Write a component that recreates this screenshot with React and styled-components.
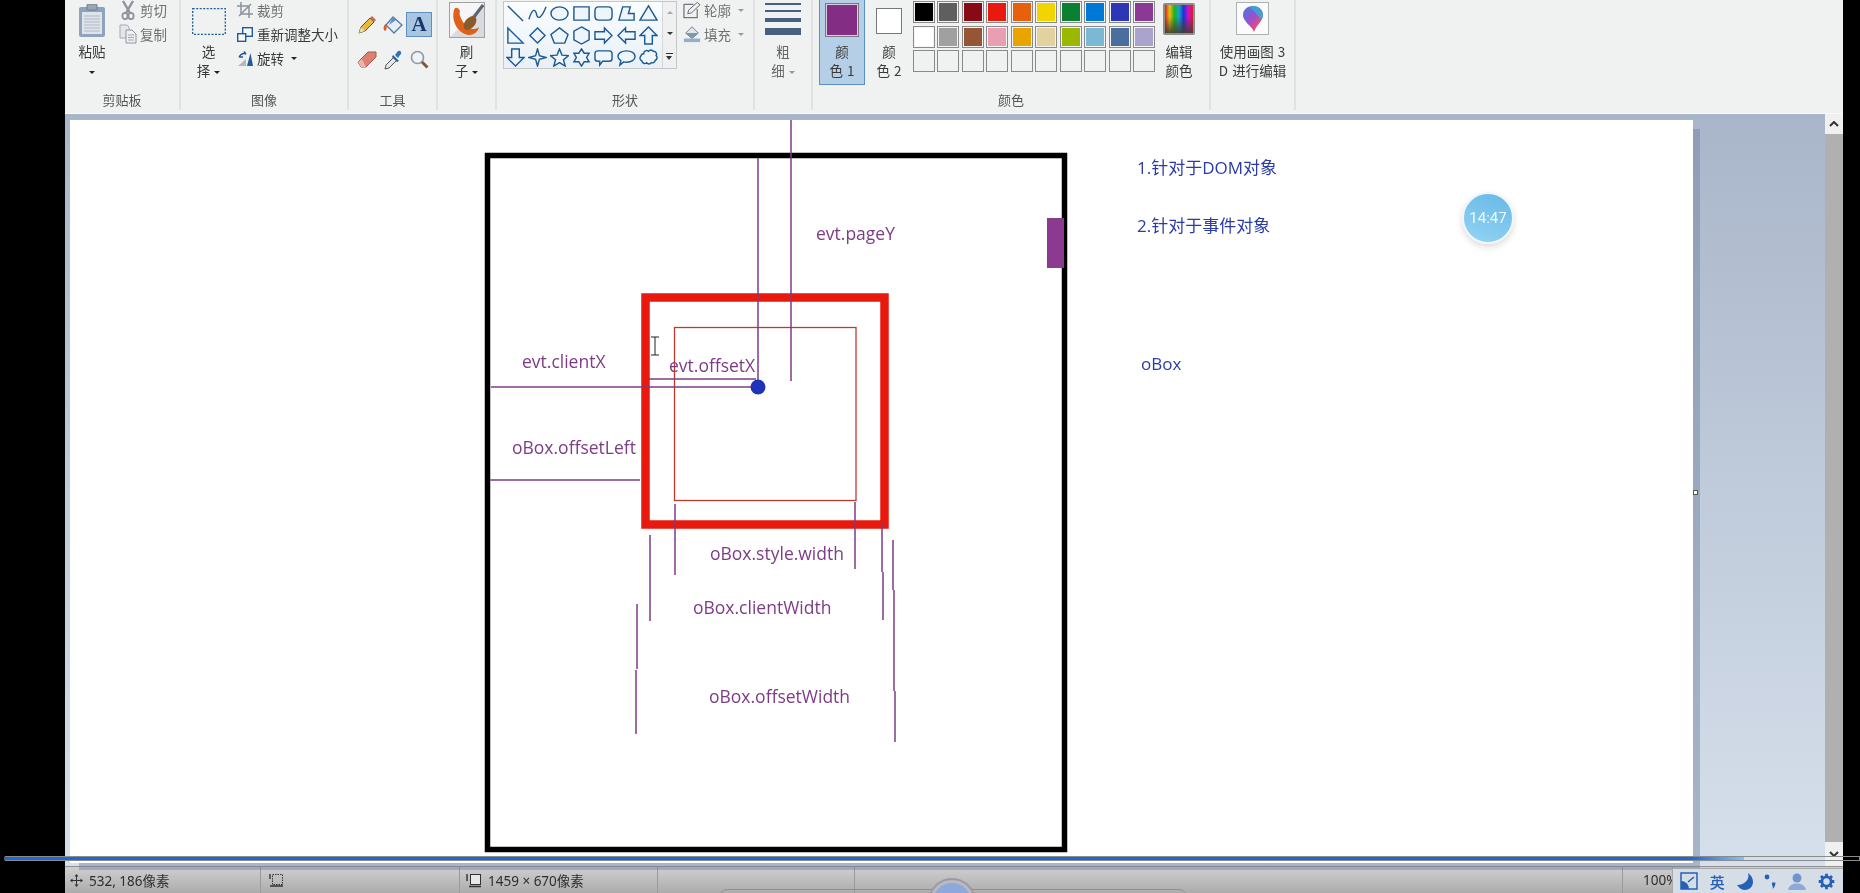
import React from "react";
import styled, { createGlobalStyle } from "styled-components";

const GlobalStyle = createGlobalStyle`
  html, body, #root { margin: 0; padding: 0; height: 100%; overflow: hidden; background: #000; }
  body { font-family: "Noto Sans CJK SC", "Liberation Sans", sans-serif; }
`;

const Page = styled.div`
  position: relative;
  display: flex;
  width: 1860px;
  height: 893px;
  padding: 0 17px 0 65px;
  box-sizing: border-box;
  overflow: hidden;
  background: #000;
  filter: blur(0.35px);
`;
const Win = styled.div`
  display: flex;
  flex-direction: column;
  flex: 1;
  min-width: 0;
`;

/* ribbon */
const Ribbon = styled.div`
  display: flex;
  height: 113px;
  flex: none;
  background: #f0f1f1;
  color: #3a3a3a;
  font-size: 13.5px;
  line-height: 19px;
  border-bottom: 1px solid #fafafa;
`;
const Group = styled.div`
  display: flex;
  flex-direction: column;
  flex: none;
  width: ${(p) => p.$w}px;
  height: 110px;
  box-sizing: border-box;
  border-right: 2px solid #e0e2e2;
`;
const GroupBody = styled.div`
  display: flex;
  height: 91px;
  padding-left: ${(p) => p.$pad || 0}px;
`;
const GroupLabel = styled.div`
  height: 18px;
  line-height: 18px;
  text-align: center;
  color: #555;
  font-size: 13px;
`;
const Tall = styled.div`
  display: flex;
  flex-direction: column;
  align-items: center;
  flex: none;
  width: ${(p) => p.$w}px;
  height: ${(p) => (p.$active ? "85px" : "auto")};
  box-sizing: border-box;
  background: ${(p) => (p.$active ? "#b5cfe6" : "transparent")};
  border: ${(p) => (p.$active ? "1px solid #5a90c8" : "none")};
  border-top: none;
  word-spacing: 1px;
`;
const TallIcon = styled.div`
  display: flex;
  align-items: center;
  justify-content: center;
  height: 42px;
  flex: none;
`;
const Line = styled.div`
  white-space: nowrap;
  height: 19px;
  color: ${(p) => (p.$dim ? "#666" : "inherit")};
`;
const Caret = styled.span`
  display: inline-block;
  width: 0;
  height: 0;
  margin-left: ${(p) => (p.$flush ? 0 : 4)}px;
  vertical-align: 2px;
  border-left: 3px solid transparent;
  border-right: 3px solid transparent;
  border-top: 3px solid ${(p) => (p.$dim ? "#999" : "#222")};
`;
const SmallCol = styled.div`
  display: flex;
  flex-direction: column;
  flex: none;
  margin-top: -2px;
`;
const SmallRow = styled.div`
  display: flex;
  align-items: center;
  gap: 3px;
  height: 24px;
  white-space: nowrap;
  color: ${(p) => (p.$dim ? "#707070" : "inherit")};
`;
const SmallIcon = styled.span`
  display: flex;
  justify-content: center;
  width: 18px;
  flex: none;
`;
const ToolGrid = styled.div`
  display: grid;
  grid-template-columns: repeat(3, 26px);
  grid-template-rows: 25px 25px;
  row-gap: 10px;
  padding: 12px 0 0 5px;
`;
const ToolCell = styled.div`
  display: flex;
  align-items: center;
  justify-content: center;
  box-sizing: border-box;
  background: ${(p) => (p.$on ? "#a8c5e2" : "transparent")};
  border: ${(p) => (p.$on ? "1px solid #5f8fc0" : "none")};
  font: bold 21px "Liberation Serif", serif;
  color: #17386c;
`;
const BrushBox = styled.div`
  width: 36px;
  height: 36px;
  margin-top: -2px;
  box-sizing: border-box;
  border: 1px solid #a0a0a0;
  background: #f6f6f6;
`;
const Gallery = styled.div`
  display: flex;
  width: 174px;
  height: 68px;
  margin: 1px 6px 0 0;
  box-sizing: border-box;
  border: 1px solid #c4c8c8;
  flex: none;
`;
const ShapeGrid = styled.div`
  display: grid;
  grid-template-columns: repeat(7, 22.2px);
  grid-template-rows: repeat(3, 22px);
  width: 158px;
  background: linear-gradient(#fbfdff, #e8f0f6);
  border-right: 1px solid #d4d8d8;
`;
const ShapeCell = styled.div`
  display: flex;
  align-items: center;
  justify-content: center;
`;
const GalleryScroll = styled.div`
  display: flex;
  flex-direction: column;
  align-items: center;
  justify-content: space-around;
  flex: 1;
  background: #f0f0f0;
`;
const ScrollArrow = styled.span`
  width: 0;
  height: 0;
  border-left: 3px solid transparent;
  border-right: 3px solid transparent;
  ${(p) => (p.$up ? "border-bottom: 3px solid #aaa;" : "border-top: 3px solid #333;")}
`;
const MoreBar = styled.span`
  width: 7px;
  height: 5px;
  border-top: 1px solid #333;
  position: relative;
  &::after {
    content: "";
    position: absolute;
    left: 0;
    top: 2px;
    border-left: 3.5px solid transparent;
    border-right: 3.5px solid transparent;
    border-top: 4px solid #333;
  }
`;
const SizeLines = styled.div`
  display: flex;
  flex-direction: column;
  width: 36px;
  height: 42px;
  padding-top: 3px;
  box-sizing: border-box;
`;
const SizeLine = styled.div`
  height: ${(p) => p.$h}px;
  margin-bottom: ${(p) => p.$gap}px;
  background: #47607f;
  flex: none;
`;
const ColorSwatch = styled.div`
  box-sizing: border-box;
  width: ${(p) => p.$size}px;
  height: ${(p) => p.$size}px;
  margin-top: ${(p) => (p.$big ? -2 : 0)}px;
  background: ${(p) => p.$bg};
  border: 1px solid #777;
  box-shadow: ${(p) => (p.$big ? "inset 0 0 0 1px #d8d0e0" : "none")};
`;
const Palette = styled.div`
  display: grid;
  grid-template-columns: repeat(10, 22px);
  grid-template-rows: repeat(3, 22px);
  column-gap: 2.45px;
  row-gap: 2.5px;
  flex: none;
  margin-top: 1px;
  width: 243px;
`;
const PaletteCell = styled.div`
  box-sizing: border-box;
  border: 1px solid #8a8a8a;
  background: ${(p) => p.$bg || "#f0f1f1"};
  box-shadow: ${(p) => (p.$bg ? "inset 0 0 0 1px #f4f4f4" : "none")};
`;
const SpectrumBox = styled.div`
  width: 32px;
  height: 32px;
  box-sizing: border-box;
  margin-top: -5px;
  border: 2px solid #8d8d8d;
  border-radius: 2px;
  background: linear-gradient(transparent 40%, rgba(70, 60, 50, 0.9)),
    linear-gradient(90deg, #e01c1c, #e8c010, #20b020, #10a8c8, #2030d8, #d010c8, #e01c1c);
`;
const LogoBox = styled.div`
  display: flex;
  align-items: center;
  justify-content: center;
  width: 33px;
  height: 33px;
  margin-top: -5px;
  box-sizing: border-box;
  border: 1px solid #b0b0b0;
  background: #fbfbfb;
`;

/* workspace */
const Workspace = styled.div`
  display: flex;
  flex: 1;
  min-height: 0;
  background: linear-gradient(#a9b5c9, #d6e0ec);
`;
const CanvasArea = styled.div`
  flex: 1;
  padding: 6px 132px 3px 5px;
  min-width: 0;
`;
const Canvas = styled.div`
  position: relative;
  width: 1623px;
  height: 100%;
  background: #fff;
  box-shadow: 8px 8px 0 -1px rgba(110, 128, 158, 0.45);
`;
const Drawing = styled.svg`
  position: absolute;
  inset: 0;
  width: 100%;
  height: 100%;
`;
const Note = styled.span`
  position: absolute;
  left: ${(p) => p.$x - 70}px;
  top: ${(p) => p.$y - 120}px;
  transform: translateY(-50%);
  font-family: "Open Sans", "Noto Sans CJK SC", sans-serif;
  font-size: ${(p) => (p.$blue ? 17 : 17.5)}px;
  line-height: 22px;
  white-space: nowrap;
  color: ${(p) => (p.$blue ? "#2b3ba6" : "#7d3c86")};
`;
const Handle = styled.span`
  position: absolute;
  left: 100%;
  top: 370px;
  width: 5px;
  height: 5px;
  box-sizing: border-box;
  background: #fff;
  border: 1px solid #555;
`;
const Clock = styled.div`
  position: absolute;
  left: 1392px;
  top: 72px;
  display: flex;
  align-items: center;
  justify-content: center;
  width: 52px;
  height: 52px;
  box-sizing: border-box;
  border-radius: 50%;
  border: 2px solid #f0f6fa;
  background: linear-gradient(20deg, #94d4f2, #66b8e8);
  box-shadow: 0 3px 6px rgba(0, 0, 0, 0.14);
  color: #f2fafe;
  font: 15px "Roboto", sans-serif;
`;
const Scrollbar = styled.div`
  display: flex;
  flex-direction: column;
  width: 18px;
  flex: none;
  background: #f0f0f0;
`;
const ScrollBtn = styled.div`
  display: flex;
  align-items: center;
  justify-content: center;
  height: ${(p) => p.$h}px;
  flex: none;
  color: #333;
`;
const ScrollThumb = styled.div`
  flex: 1;
  background: #b0b0b0;
`;

/* status bar */
const Status = styled.div`
  display: flex;
  height: 27px;
  flex: none;
  background: linear-gradient(#cfcfcf, #acacac);
  border-top: 1px solid #8f8f8f;
  box-sizing: border-box;
  font: 13.5px "Noto Sans", "Noto Sans CJK SC", sans-serif;
  color: #2e2e2e;
`;
const StatusCell = styled.div`
  display: flex;
  align-items: center;
  gap: 6px;
  flex: none;
  width: ${(p) => p.$w}px;
  padding-left: ${(p) => p.$pad || 0}px;
  box-sizing: border-box;
  border-right: 1px solid #9a9a9a;
  white-space: nowrap;
`;
const Progress = styled.div`
  position: absolute;
  left: 4px;
  right: 0;
  top: 856px;
  height: 5px;
  box-sizing: border-box;
  border: 1px solid #8b8b8b;
  border-left-color: #666;
  border-radius: 2px 0 0 2px;
`;
const ProgressFill = styled.div`
  height: 3px;
  background: linear-gradient(90deg, #1769e0 97%, #8cc0f0);
`;
const Dock = styled.div`
  position: absolute;
  left: 719px;
  top: 889px;
  width: 468px;
  height: 20px;
  box-sizing: border-box;
  border: 1px solid #8e8e9e;
  border-radius: 8px 8px 0 0;
`;
const DockButton = styled.div`
  position: absolute;
  left: 928px;
  top: 878px;
  width: 48px;
  height: 48px;
  box-sizing: border-box;
  border-radius: 50%;
  border: 2px solid #9a9aa8;
  background: #b9b9bf;
  &::after {
    content: "";
    position: absolute;
    inset: 3px;
    border-radius: 50%;
    background: #8da8dc;
  }
`;
const Tray = styled.div`
  position: absolute;
  left: 1672px;
  top: 868px;
  display: flex;
  align-items: center;
  justify-content: space-between;
  width: 171px;
  height: 25px;
  padding: 0 8px 0 7px;
  box-sizing: border-box;
  background: #d5dde6;
  border-top: 1px solid #a8a8a8;
  border-left: 1px solid #a8a8a8;
  color: #2761b6;
  font-size: 15px;
  font-weight: 500;
`;

const PALETTE = [
  "#000000", "#5f5f5f", "#880a14", "#e8190e", "#e8600a", "#f2d500", "#0a8030", "#0078d7", "#2e36b8", "#8a3a94",
  "#ffffff", "#a0a0a0", "#955636", "#e89fb4", "#eaa400", "#e3d29e", "#9ab800", "#7ab8d4", "#4a6f9f", "#aaa4cc",
  null, null, null, null, null, null, null, null, null, null,
];

const SHAPES = [
  "M2 2L18 18",
  "M1 16C5 3 8 6 9 11S14 16 19 3",
  "M1 10a9 7 0 1 0 18 0a9 7 0 1 0-18 0Z",
  "M2 3H18V17H2Z",
  "M5 3H15Q19 3 19 7V13Q19 17 15 17H5Q1 17 1 13V7Q1 3 5 3Z",
  "M2 17L6 3H14L12 10H18V17Z",
  "M10 2L19 17H1Z",
  "M2 2L18 18H2Z",
  "M10 2L18 10L10 18L2 10Z",
  "M10 2L19 9L15.5 18H4.5L1 9Z",
  "M10 1L18 5.5V14.5L10 19L2 14.5V5.5Z",
  "M1 6H11V2L19 10L11 18V14H1Z",
  "M19 6H9V2L1 10L9 18V14H19Z",
  "M10 1L19 10H14V19H6V10H1Z",
  "M6 1H14V10H19L10 19L1 10H6Z",
  "M10 1L12 8L19 10L12 12L10 19L8 12L1 10L8 8Z",
  "M10 1L12.6 7.5L19.5 8L14.2 12.3L16 19L10 15.3L4 19L5.8 12.3L.5 8L7.4 7.5Z",
  "M10 1L12.8 5.5H18L15.4 10L18 14.5H12.8L10 19L7.2 14.5H2L4.6 10L2 5.5H7.2Z",
  "M4 3H16Q19 3 19 6V11Q19 14 16 14H9L6 18V14H4Q1 14 1 11V6Q1 3 4 3Z",
  "M10 3C15 3 19 5.5 19 9S15 15 10 15Q8 15 7 14.6L3 18L4 13.2Q1 11.5 1 9C1 5.5 5 3 10 3Z",
  "M5 6a3 3 0 0 1 5-2.500a3 3 0 0 1 5 0a3 3 0 0 1 3 4.500a3 3 0 0 1-1 5a3 3 0 0 1-4 2.500a3 3 0 0 1-5 0a3 3 0 0 1-5-2a3 3 0 0 1-1-5a3 3 0 0 1 3-2.500Z",
];

const PURPLE_LINES = [
  [758, 158, 758, 387],
  [791, 120, 791, 381],
  [491, 387, 752, 387],
  [649, 379, 756, 379],
  [490, 480, 640, 480],
  [675, 504, 675, 575],
  [855, 502, 855, 569],
  [650, 535, 650, 621],
  [882, 524, 882, 572],
  [883, 572, 883, 620],
  [893, 540, 893, 590],
  [894, 590, 894, 691],
  [895, 691, 895, 742],
  [637, 604, 637, 669],
  [636, 670, 636, 734],
];

const PasteIcon = () => (
  <svg width="28" height="34" viewBox="0 0 28 34">
    <rect x="1" y="3" width="26" height="30" rx="2" fill="#8fa3bc" />
    <rect x="4" y="8" width="20" height="22" fill="#dfe4ea" />
    <path d="M6 12H22M6 15H22M6 18H22M6 21H22M6 24H22M6 27H22" stroke="#aeb9c6" />
    <rect x="9" y="0" width="10" height="6" rx="1" fill="#9aa6b4" stroke="#6f7c8c" />
  </svg>
);
const ScissorsIcon = () => (
  <svg width="14" height="20" viewBox="0 0 14 20">
    <path d="M2 1L9 13M12 1L5 13" stroke="#8d9199" strokeWidth="2.4" />
    <ellipse cx="4" cy="16" rx="2.6" ry="3.2" fill="none" stroke="#8d9199" strokeWidth="1.8" />
    <ellipse cx="10" cy="16" rx="2.6" ry="3.2" fill="none" stroke="#8d9199" strokeWidth="1.8" />
  </svg>
);
const CopyIcon = () => (
  <svg width="18" height="20" viewBox="0 0 18 20">
    <path d="M1 1H8L10 3V14H1Z" fill="#e4e6e8" stroke="#a6abb2" />
    <path d="M7 6H13L17 10V19H7Z" fill="#eef0f2" stroke="#8f959d" />
    <path d="M9 11H15M9 13.5H15M9 16H15" stroke="#a0a5ac" />
  </svg>
);
const CropIcon = () => (
  <svg width="16" height="16" viewBox="0 0 16 16">
    <path d="M4 0V12H16M0 4H12V16M2 14L14 2" fill="none" stroke="#8d939b" strokeWidth="1.5" />
  </svg>
);
const ResizeIcon = () => (
  <svg width="16" height="15" viewBox="0 0 16 15">
    <rect x="5.7" y=".7" width="9.6" height="8.6" fill="#f7f9fb" stroke="#1f5c99" strokeWidth="1.4" />
    <rect x=".7" y="6.7" width="8" height="7.6" fill="#f7f9fb" stroke="#1f5c99" strokeWidth="1.4" />
  </svg>
);
const RotateIcon = () => (
  <svg width="17" height="15" viewBox="0 0 17 15">
    <path d="M10 15L16 15L13.5 2Z" fill="#1f5c99" />
    <path d="M1 15H9V8Z" fill="#b4b8bc" />
    <path d="M2 6Q5 1 9 3M2 6L6 6M9 3L7 .5" fill="none" stroke="#1f5c99" strokeWidth="1.4" />
  </svg>
);
const PencilIcon = () => (
  <svg width="18" height="18" viewBox="0 0 18 18">
    <path d="M1 17L3 11L12 2L16 6L7 15Z" fill="#e8b93a" stroke="#5b5330" strokeWidth="1" />
    <path d="M12 2L14 0L18 4L16 6Z" fill="#c86a5a" />
    <path d="M1 17L3 11L7 15Z" fill="#f0d8b0" />
  </svg>
);
const FillIcon = () => (
  <svg width="20" height="20" viewBox="0 0 20 20">
    <path d="M10 2L19 10L11 18L3 10Z" fill="#e6edf4" stroke="#4f7aa4" strokeWidth="1.3" />
    <path d="M6 10L10 2L13 5Z" fill="#5f92c0" />
    <path d="M3 9C0 10 0 15 2 16C4 15 4 12 3 9Z" fill="#e05a20" />
  </svg>
);
const EraserIcon = () => (
  <svg width="20" height="17" viewBox="0 0 20 17">
    <path d="M1 11L11 1H19V6L9 16H4Z" fill="#df7f72" stroke="#a35a50" />
    <path d="M1 11L5 8L9 16H4Z" fill="#eeb4a8" />
  </svg>
);
const PickerIcon = () => (
  <svg width="18" height="20" viewBox="0 0 18 20">
    <path d="M1 19L2 15L10 7L13 10L5 18Z" fill="#e4e8ec" stroke="#555" />
    <path d="M9 5L15 11L13 12L8 7Z" fill="#1f5c99" />
    <path d="M11 5L14 1Q16 0 17 2Q18 4 16 5L14 8Z" fill="#2b74bc" />
  </svg>
);
const GlassIcon = () => (
  <svg width="19" height="19" viewBox="0 0 19 19">
    <circle cx="7.500" cy="7.500" r="6" fill="#eef3f7" stroke="#8f979f" strokeWidth="1.6" />
    <path d="M12 12L17.500 17.500" stroke="#7d5a3c" strokeWidth="3" />
  </svg>
);
const BrushIcon = () => (
  <svg width="34" height="34" viewBox="0 0 34 34">
    <path d="M34 0V34H0Z" fill="#d8dbe0" />
    <path d="M4 7C1 18 8 31 19 32C25 32 28 28 29 24C24 28 17 26 13 19C10 14 9 11 10 8C8 4 5 4 4 7Z" fill="#e0601a" />
    <path d="M24 14L33 2" stroke="#5c6470" strokeWidth="3" />
    <ellipse cx="20" cy="20" rx="8" ry="5" transform="rotate(-50 20 20)" fill="#8a5a2a" />
  </svg>
);
const OutlineIcon = () => (
  <svg width="19" height="18" viewBox="0 0 19 18">
    <path d="M1 3H11M1 3V17H15V8" fill="none" stroke="#6f767e" strokeWidth="1.3" />
    <path d="M5 13L6 9L15 1L18 3.500L9 12Z" fill="#eef0f2" stroke="#5f666e" />
  </svg>
);
const BucketIcon = () => (
  <svg width="20" height="18" viewBox="0 0 20 18">
    <path d="M10 1L17 8L10 14L3 8Z" fill="#dfe6ec" stroke="#6a7884" />
    <path d="M1 14H19V18H1Z" fill="#98aec4" />
    <path d="M3 8L10 14L17 8Z" fill="#7e98b0" />
  </svg>
);
const SelectIcon = () => (
  <svg width="34" height="27" viewBox="0 0 34 27">
    <rect x=".7" y=".7" width="32.600" height="25.600" fill="none" stroke="#1f5c99" strokeWidth="1.3" strokeDasharray="2 1.500" />
  </svg>
);
const Paint3DLogo = () => (
  <svg width="22" height="28" viewBox="0 0 22 28">
    <defs>
      <linearGradient id="drop" x1="0" y1="0" x2="1" y2="1">
        <stop offset="0" stopColor="#3d7fe0" />
        <stop offset=".45" stopColor="#9a4fd0" />
        <stop offset=".75" stopColor="#e84c78" />
        <stop offset="1" stopColor="#f0a020" />
      </linearGradient>
    </defs>
    <path d="M11 1C17 1 21 5 21 10C21 16 15 19 12 27C10 21 1 17 1 10C1 5 5 1 11 1Z" fill="url(#drop)" />
    <path d="M11 1C17 1 21 5 21 10C21 12 20 14 19 15C16 10 12 6 7 2Z" fill="#22b8d8" opacity=".75" />
  </svg>
);

const MoveIcon = () => (
  <svg width="13" height="13" viewBox="0 0 13 13">
    <path d="M6.500 0L8.500 2.500H4.500ZM6.500 13L4.500 10.500H8.500ZM0 6.500L2.500 4.500V8.500ZM13 6.500L10.500 8.500V4.500ZM6 2H7V11H6ZM2 6H11V7H2Z" fill="#333" />
  </svg>
);
const SelSizeIcon = () => (
  <svg width="15" height="15" viewBox="0 0 15 15">
    <rect x="3.500" y="1.500" width="10" height="10" fill="none" stroke="#333" strokeDasharray="1.500 1" />
    <path d="M1 1V6M1 13H14" stroke="#333" strokeWidth="1.400" />
  </svg>
);
const CanvasSizeIcon = () => (
  <svg width="16" height="15" viewBox="0 0 16 15">
    <rect x="4.500" y="1.500" width="10" height="10" fill="#e8e8e8" stroke="#333" />
    <path d="M1 1V8M3 13.500H15" stroke="#333" strokeWidth="1.400" />
  </svg>
);

const ChevronUp = () => (
  <svg width="10" height="6" viewBox="0 0 10 6">
    <path d="M1 5L5 1L9 5" fill="none" stroke="currentColor" strokeWidth="2" />
  </svg>
);
const ChevronDown = () => (
  <svg width="10" height="6" viewBox="0 0 10 6">
    <path d="M1 1L5 5L9 1" fill="none" stroke="currentColor" strokeWidth="2" />
  </svg>
);

const TrayTablet = () => (
  <svg width="18" height="18" viewBox="0 0 18 18">
    <path d="M1 1H17V17H1Z" fill="none" stroke="#2761b6" strokeWidth="1.500" />
    <path d="M1 17V9A8 8 0 0 1 9 17Z" fill="#2761b6" />
    <path d="M8 10L14 5" stroke="#2761b6" strokeWidth="1.500" />
  </svg>
);
const TrayMoon = () => (
  <svg width="16" height="17" viewBox="0 0 16 17">
    <path d="M11 0C13 6 8 12 0 12C2 15 5 17 8 17C13 17 16 13 16 9C16 5 14 2 11 0Z" fill="#2761b6" />
  </svg>
);
const TrayPunct = () => (
  <svg width="12" height="15" viewBox="0 0 12 15">
    <circle cx="3" cy="3" r="2.400" fill="#2761b6" />
    <path d="M8 8.500H11.500C11.500 11 10.500 13.500 8.500 15C9 13 9 11.500 8 11.500Z" fill="#2761b6" />
  </svg>
);
const TrayUser = () => (
  <svg width="18" height="17" viewBox="0 0 18 17">
    <circle cx="9" cy="5" r="4.500" fill="#6f96cc" />
    <path d="M0 17C1 12 5 10.500 9 10.500S17 12 18 17Z" fill="#8eaad4" />
  </svg>
);
const TrayGear = () => (
  <svg width="17" height="17" viewBox="0 0 24 24">
    <circle cx="12" cy="12" r="6.500" fill="none" stroke="#2761b6" strokeWidth="4" />
    <path d="M12 1V5M12 19V23M1 12H5M19 12H23M4.200 4.200L7 7M17 17L19.800 19.800M19.800 4.200L17 7M7 17L4.200 19.800" stroke="#2761b6" strokeWidth="4" />
  </svg>
);

export default function App() {
  return (
    <Page>
      <GlobalStyle />
      <Win>
        <Ribbon>
          <Group $w={116}>
            <GroupBody>
              <Tall $w={54}>
                <TallIcon><PasteIcon /></TallIcon>
                <Line>粘贴</Line>
                <Line><Caret $flush /></Line>
              </Tall>
              <SmallCol>
                <SmallRow $dim><SmallIcon><ScissorsIcon /></SmallIcon>剪切</SmallRow>
                <SmallRow $dim><SmallIcon><CopyIcon /></SmallIcon>复制</SmallRow>
              </SmallCol>
            </GroupBody>
            <GroupLabel>剪贴板</GroupLabel>
          </Group>
          <Group $w={168}>
            <GroupBody>
              <Tall $w={55}>
                <TallIcon><SelectIcon /></TallIcon>
                <Line>选</Line>
                <Line>择<Caret /></Line>
              </Tall>
              <SmallCol>
                <SmallRow $dim><SmallIcon><CropIcon /></SmallIcon>裁剪</SmallRow>
                <SmallRow><SmallIcon><ResizeIcon /></SmallIcon>重新调整大小</SmallRow>
                <SmallRow><SmallIcon><RotateIcon /></SmallIcon>旋转<Caret /></SmallRow>
              </SmallCol>
            </GroupBody>
            <GroupLabel>图像</GroupLabel>
          </Group>
          <Group $w={89}>
            <GroupBody>
              <ToolGrid>
                <ToolCell><PencilIcon /></ToolCell>
                <ToolCell><FillIcon /></ToolCell>
                <ToolCell $on>A</ToolCell>
                <ToolCell><EraserIcon /></ToolCell>
                <ToolCell><PickerIcon /></ToolCell>
                <ToolCell><GlassIcon /></ToolCell>
              </ToolGrid>
            </GroupBody>
            <GroupLabel>工具</GroupLabel>
          </Group>
          <Group $w={59}>
            <GroupBody>
              <Tall $w={57}>
                <TallIcon>
                  <BrushBox><BrushIcon /></BrushBox>
                </TallIcon>
                <Line>刷</Line>
                <Line>子<Caret /></Line>
              </Tall>
            </GroupBody>
          </Group>
          <Group $w={258}>
            <GroupBody $pad={6}>
              <Gallery>
                <ShapeGrid>
                  {SHAPES.map((d) => (
                    <ShapeCell key={d}>
                      <svg width="19" height="19" viewBox="0 0 20 20">
                        <path d={d} fill={d === SHAPES[0] || d === SHAPES[1] ? "none" : "#eef5fb"} stroke="#1c5a94" strokeWidth="1.500" />
                      </svg>
                    </ShapeCell>
                  ))}
                </ShapeGrid>
                <GalleryScroll>
                  <ScrollArrow $up />
                  <ScrollArrow />
                  <MoreBar />
                </GalleryScroll>
              </Gallery>
              <SmallCol>
                <SmallRow $dim><SmallIcon><OutlineIcon /></SmallIcon>轮廓<Caret $dim /></SmallRow>
                <SmallRow $dim><SmallIcon><BucketIcon /></SmallIcon>填充<Caret $dim /></SmallRow>
              </SmallCol>
            </GroupBody>
            <GroupLabel>形状</GroupLabel>
          </Group>
          <Group $w={58}>
            <GroupBody>
              <Tall $w={56}>
                <SizeLines>
                  <SizeLine $h={1.500} $gap={5} />
                  <SizeLine $h={2} $gap={6} />
                  <SizeLine $h={4} $gap={6} />
                  <SizeLine $h={7} $gap={0} />
                </SizeLines>
                <Line $dim>粗</Line>
                <Line $dim>细<Caret $dim /></Line>
              </Tall>
            </GroupBody>
          </Group>
          <Group $w={398}>
            <GroupBody $pad={6}>
              <Tall $w={46} $active>
                <TallIcon><ColorSwatch $size={34} $bg="#842d85" $big /></TallIcon>
                <Line>颜</Line>
                <Line>色 1</Line>
              </Tall>
              <Tall $w={48}>
                <TallIcon><ColorSwatch $size={26} $bg="#fff" /></TallIcon>
                <Line>颜</Line>
                <Line>色 2</Line>
              </Tall>
              <Palette>
                {PALETTE.map((c, i) => (
                  <PaletteCell key={i} $bg={c} />
                ))}
              </Palette>
              <Tall $w={46}>
                <TallIcon><SpectrumBox /></TallIcon>
                <Line>编辑</Line>
                <Line>颜色</Line>
              </Tall>
            </GroupBody>
            <GroupLabel>颜色</GroupLabel>
          </Group>
          <Group $w={85}>
            <GroupBody>
              <Tall $w={83}>
                <TallIcon><LogoBox><Paint3DLogo /></LogoBox></TallIcon>
                <Line>使用画图 3</Line>
                <Line>D 进行编辑</Line>
              </Tall>
            </GroupBody>
          </Group>
        </Ribbon>

        <Workspace>
          <CanvasArea>
            <Canvas>
              <Drawing viewBox="70 120 1623 743">
                <rect x="487.500" y="155.500" width="577" height="694" fill="none" stroke="#000" strokeWidth="5.500" />
                <rect x="1047" y="218" width="17" height="50" fill="#8b3a8f" />
                <rect x="645.500" y="297.500" width="239" height="227" fill="none" stroke="#e8190e" strokeWidth="8.500" />
                <rect x="674.500" y="327.500" width="181.500" height="173" fill="none" stroke="#c03a30" strokeWidth="1.300" />
                {PURPLE_LINES.map(([x1, y1, x2, y2]) => (
                  <line key={`${x1}-${y1}`} x1={x1} y1={y1} x2={x2} y2={y2} stroke="#7e3a84" strokeWidth="1.500" />
                ))}
                <circle cx="758" cy="387" r="7.500" fill="#1e34b8" />
                <path d="M651 337H659M655 337V355M651 355H659" stroke="#222" strokeWidth="1" fill="none" />
              </Drawing>
              <Note $x={816} $y={233}>evt.pageY</Note>
              <Note $x={522} $y={361}>evt.clientX</Note>
              <Note $x={669} $y={365}>evt.offsetX</Note>
              <Note $x={512} $y={447}>oBox.offsetLeft</Note>
              <Note $x={710} $y={553}>oBox.style.width</Note>
              <Note $x={693} $y={607}>oBox.clientWidth</Note>
              <Note $x={709} $y={696}>oBox.offsetWidth</Note>
              <Note $x={1137} $y={168} $blue>1.针对于DOM对象</Note>
              <Note $x={1137} $y={226} $blue>2.针对于事件对象</Note>
              <Note $x={1141} $y={364} $blue>oBox</Note>
              <Clock>14:47</Clock>
              <Handle />
            </Canvas>
          </CanvasArea>
          <Scrollbar>
            <ScrollBtn $h={20}><ChevronUp /></ScrollBtn>
            <ScrollThumb />
            <ScrollBtn $h={24}><ChevronDown /></ScrollBtn>
          </Scrollbar>
        </Workspace>

        <Status>
          <StatusCell $w={196} $pad={5}><MoveIcon />532, 186像素</StatusCell>
          <StatusCell $w={199} $pad={8}><SelSizeIcon /></StatusCell>
          <StatusCell $w={198} $pad={6}><CanvasSizeIcon />1459 × 670像素</StatusCell>
          <StatusCell $w={197} />
          <StatusCell $w={768} />
          <StatusCell $w={50} $pad={20}>100%</StatusCell>
        </Status>
      </Win>

      <Progress>
        <ProgressFill style={{ width: `${((1740 - 5) / 1850) * 100}%` }} />
      </Progress>
      <Dock />
      <DockButton />
      <Tray>
        <TrayTablet />
        <span>英</span>
        <TrayMoon />
        <TrayPunct />
        <TrayUser />
        <TrayGear />
      </Tray>
    </Page>
  );
}
